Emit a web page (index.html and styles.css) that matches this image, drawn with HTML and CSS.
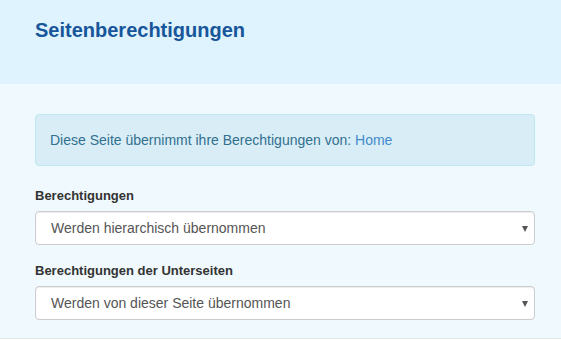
FILE: index.html
```html
<!DOCTYPE html>
<html lang="de">

<head>
    <meta charset="UTF-8">
    <meta name="viewport" content="width=device-width, initial-scale=1.0">
    <title>Seitenberechtigungen</title>
    <link rel="stylesheet" href="styles.css">
</head>

<body>
    <!-- Kopfbereich -->
    <div class="page_head">
        <h1>Seitenberechtigungen</h1>
    </div>

    <!-- Inhalt -->
    <div class="page_body">
        <div class="alert_info">
            Diese Seite übernimmt ihre Berechtigungen von: <a href="#">Home</a>
        </div>

        <div class="form_group">
            <label for="perm">Berechtigungen</label>
            <div class="select_wrap">
                <select id="perm" class="form_select">
                    <option>Werden hierarchisch übernommen</option>
                    <option>Individuell festlegen</option>
                </select>
            </div>
        </div>

        <div class="form_group">
            <label for="sub_perm">Berechtigungen der Unterseiten</label>
            <div class="select_wrap">
                <select id="sub_perm" class="form_select">
                    <option>Werden von dieser Seite übernommen</option>
                    <option>Individuell festlegen</option>
                </select>
            </div>
        </div>
    </div>
</body>

</html>
```

FILE: styles.css
```css
* {
    padding: 0px;
    margin: 0px;
    box-sizing: border-box;
}

body {
    font-family: "Liberation Sans", Arial, sans-serif;
    font-size: 14px;
    color: #333;
    background-color: #fff;
}

.page_head {
    background-color: #dff3fe;
    height: 84px;
    padding: 18px 35px 0 35px;
}

.page_head h1 {
    font-size: 20px;
    line-height: 24px;
    font-weight: bold;
    color: #17569a;
}

.page_body {
    background-color: #f0f9fd;
    padding: 30px 26px 18px 35px;
    border-bottom: 1px solid #e3e8ea;
}

.alert_info {
    background-color: #d9edf7;
    border: 1px solid #bce8f1;
    border-radius: 4px;
    color: #31708f;
    padding: 15px 14px;
    line-height: 20px;
    margin-bottom: 19px;
}

.alert_info a {
    color: #428bca;
    text-decoration: none;
}

.form_group {
    margin-bottom: 15px;
}

.form_group:last-child {
    margin-bottom: 0px;
}

.form_group label {
    display: block;
    font-size: 13px;
    font-weight: bold;
    line-height: 21px;
    margin-bottom: 5px;
}

.select_wrap {
    position: relative;
}

/* Pfeil der Auswahlliste */
.select_wrap::after {
    content: "";
    position: absolute;
    right: 7px;
    top: 15px;
    border-left: 3.5px solid transparent;
    border-right: 3.5px solid transparent;
    border-top: 6px solid #555;
    pointer-events: none;
}

.form_select {
    display: block;
    width: 100%;
    height: 34px;
    padding: 0 30px 0 15px;
    font-family: "Liberation Sans", Arial, sans-serif;
    font-size: 14px;
    color: #555;
    background-color: #fff;
    border: 1px solid #ccc;
    border-radius: 4px;
    box-shadow: inset 0 1px 1px rgba(0, 0, 0, 0.075);
    appearance: none;
    -webkit-appearance: none;
}
```
